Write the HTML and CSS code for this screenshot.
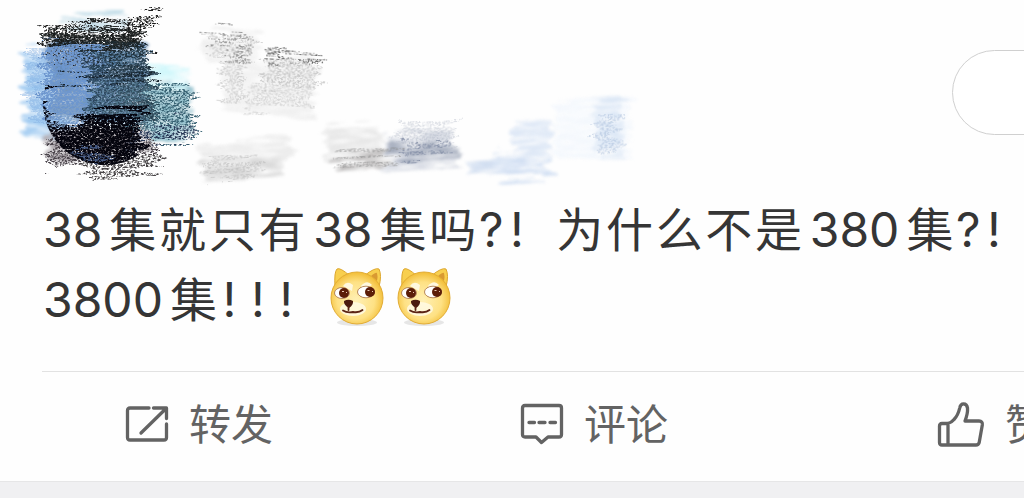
FILE: index.html
```
<!DOCTYPE html>
<html lang="zh-CN">
<head>
    <meta charset="UTF-8">
    <meta name="viewport" content="width=device-width, initial-scale=1.0">
    <title>微博</title>
    <link rel="stylesheet" href="styles.css">
</head>
<body>
    <article class="post">
        <header class="post-header">
            <svg class="scribble" width="660" height="195" viewBox="0 0 660 195">
                <defs>
                    <!-- solid crayon: ragged edges, little grain -->
                    <filter id="dense" x="-20%" y="-20%" width="140%" height="140%" color-interpolation-filters="sRGB">
                        <feTurbulence type="fractalNoise" baseFrequency="0.015 0.2" numOctaves="3" seed="4" result="streak"/>
                        <feDisplacementMap in="SourceGraphic" in2="streak" scale="38" xChannelSelector="R" yChannelSelector="B" result="rough"/>
                        <feTurbulence type="fractalNoise" baseFrequency="0.43 0.57" numOctaves="4" seed="9"/>
                        <feColorMatrix values="0 0 0 0 0  0 0 0 0 0  0 0 0 0 0  3.5 0 0 0 -0.9"/>
                        <feGaussianBlur stdDeviation="0.4" result="grain"/>
                        <feComposite in="rough" in2="grain" operator="in"/>
                    </filter>
                    <!-- dry crayon: the paper shows through -->
                    <filter id="dry" x="-20%" y="-20%" width="140%" height="140%" color-interpolation-filters="sRGB">
                        <feTurbulence type="fractalNoise" baseFrequency="0.012 0.18" numOctaves="3" seed="21" result="streak"/>
                        <feDisplacementMap in="SourceGraphic" in2="streak" scale="36" xChannelSelector="R" yChannelSelector="B" result="rough"/>
                        <feTurbulence type="fractalNoise" baseFrequency="0.43 0.57" numOctaves="4" seed="2"/>
                        <feColorMatrix values="0 0 0 0 0  0 0 0 0 0  0 0 0 0 0  4 0 0 0 -1.6"/>
                        <feGaussianBlur stdDeviation="0.5" result="grain"/>
                        <feComposite in="rough" in2="grain" operator="in"/>
                    </filter>
                    <!-- faint colour spread under the strokes -->
                    <filter id="wash" x="-20%" y="-30%" width="140%" height="160%" color-interpolation-filters="sRGB">
                        <feTurbulence type="fractalNoise" baseFrequency="0.012 0.14" numOctaves="3" seed="7" result="streak"/>
                        <feDisplacementMap in="SourceGraphic" in2="streak" scale="26" xChannelSelector="R" yChannelSelector="B" result="rough"/>
                        <feTurbulence type="fractalNoise" baseFrequency="0.04 0.3" numOctaves="3" seed="12"/>
                        <feColorMatrix values="0 0 0 0 0  0 0 0 0 0  0 0 0 0 0  2.2 0 0 0 -0.35" result="grain"/>
                        <feComposite in="rough" in2="grain" operator="in" result="r"/>
                        <feGaussianBlur in="r" stdDeviation="1.5"/>
                    </filter>
                    <clipPath id="avatar">
                        <circle cx="105" cy="103" r="62"/>
                    </clipPath>
                </defs>

                <!-- avatar -->
                <g>
                    <g filter="url(#wash)">
                        <path d="M24 50H70V134H24Z" fill="#9cc8f0"/>
                        <path d="M140 66H190V95H140Z" fill="#d2f7fb"/>
                        <path d="M150 86H190V140H140Z" fill="#8fbecb"/>
                        <path d="M60 13H125V30H60Z" fill="#c3dde8"/>
                        <path d="M48 132H150V158H48Z" fill="#a8a2a8"/>
                        <path d="M50 42H146V120H50Z" fill="#6086b0"/>
                    </g>
                    <g filter="url(#dry)">
                        <path d="M46 20H118L158 9L163 13L142 32L150 62H46Z" fill="#1c1c1c"/>
                        <path d="M125 86H190L194 140L120 148Z" fill="#396374"/>
                        <path d="M48 136H160V156H100V162L50 172Z" fill="#4a444b"/>
                        <path d="M84 158L160 152L162 168L86 176Z" fill="#4a4749"/>
                        <path d="M130 128L190 124V138L130 146Z" fill="#2a3a58"/>
                    </g>
                    <g filter="url(#dense)">
                        <path d="M46 30H140V48H46Z" fill="#15191a" opacity=".9"/>
                        <path d="M30 52H90V122H30Z" fill="#84b0e2" opacity=".5"/>
                        <path d="M44 46L112 44V118H44Z" fill="#6d96ce"/>
                    </g>
                    <g filter="url(#dense)">
                        <path d="M98 50H146V70H98Z" fill="#466c88" opacity=".8"/>
                        <path d="M92 66L150 60V124H84Z" fill="#22394a" opacity=".85"/>
                    </g>
                    <g filter="url(#dry)">
                        <path d="M60 74L152 68V78H60Z" fill="#16222c"/>
                        <path d="M80 46H146V64H80Z" fill="#1c2c36" opacity=".8"/>
                        <path d="M92 80H150V122H84Z" fill="#6d9cb4" opacity=".5"/>
                    </g>
                    <g clip-path="url(#avatar)">
                        <g filter="url(#dense)">
                            <path d="M38 90L45 92L50 120L78 126L86 114L140 108V170H38Z" fill="#060611"/>
                        </g>
                        <g filter="url(#dense)">
                            <path d="M60 132L80 128L84 114L134 110V170H60Z" fill="#04040d"/>
                            <path d="M66 134H134V154H66Z" fill="#04040d"/>
                        </g>
                        <g filter="url(#dry)">
                            <path d="M48 104H84V128H50Z" fill="#7d9fc8"/>
                            <path d="M74 150H104V162H84Z" fill="#516b9e" opacity=".8"/>
                        </g>
                    </g>
                </g>

                <!-- name -->
                <g transform="rotate(3 260 80)">
                    <g filter="url(#wash)">
                        <path d="M202 34H256V60H316V114H224V62H202Z" fill="#e9e9e9" opacity=".7"/>
                    </g>
                    <g filter="url(#dry)">
                        <path d="M206 35H250V41H206Z" fill="#999"/>
                        <path d="M208 42H252V50H208Z" fill="#bbb" opacity=".6"/>
                        <path d="M228 46H250V64H228Z" fill="#777" opacity=".7"/>
                        <path d="M222 60H244V102H222Z" fill="#aaa" opacity=".45"/>
                        <path d="M266 56H324V61H266Z" fill="#666"/>
                        <path d="M262 60H318V86H262Z" fill="#999" opacity=".45"/>
                        <path d="M250 84H312V112H250Z" fill="#999" opacity=".3"/>
                    </g>
                </g>

                <!-- time and source -->
                <g transform="rotate(-3 400 140)">
                    <g filter="url(#wash)">
                        <path d="M200 134H290V154H200Z" fill="#ececec"/>
                        <path d="M200 150H285V170H200Z" fill="#dadada"/>
                        <path d="M326 122H380V160H326Z" fill="#e8e8e8"/>
                        <path d="M330 151H395V162H330Z" fill="#bebcbc"/>
                        <path d="M384 134H456V171H384Z" fill="#d6dae3"/>
                        <path d="M386 144H456V158H386Z" fill="#a3abbc"/>
                        <path d="M464 166H550V178H464Z" fill="#d0ddf0"/>
                        <path d="M492 158H550V184H492Z" fill="#d3e0f3"/>
                        <path d="M512 132H551V165H512Z" fill="#dee8f6"/>
                        <path d="M555 110H630V166H555Z" fill="#f4f8fd"/>
                        <path d="M596 108H622V166H596Z" fill="#dde8f6"/>
                    </g>
                    <g filter="url(#dry)">
                        <path d="M204 150H262V166H204Z" fill="#aaa" opacity=".45"/>
                        <path d="M332 150H398V160H332Z" fill="#888" opacity=".5"/>
                        <path d="M400 124H455V144H400Z" fill="#aab1c0" opacity=".4"/>
                        <path d="M402 144H452V158H402Z" fill="#7e8aa2" opacity=".8"/>
                        <path d="M596 124H618V164H596Z" fill="#94add0" opacity=".4"/>
                    </g>
                </g>
            </svg>
            <button class="follow" aria-label="关注"></button>
        </header>

        <div class="post-text">
            <p><span class="num first">38</span><span class="han">集就只有</span><span class="num">38</span><span class="han">集吗</span><span class="mark">?!</span><span class="gap"></span><span class="han">为什么不是</span><span class="num">380</span><span class="han">集</span><span class="mark">?!</span></p>
            <p><span class="num first">3800</span><span class="han">集</span><span class="mark triple">!!!</span><svg class="doge"><use href="#doge"/></svg><svg class="doge"><use href="#doge"/></svg></p>
        </div>

        <footer class="actions">
            <div class="action">
                <svg width="42" height="36" viewBox="0 0 42 36">
                    <path d="M23 2H4Q1.500 2 1.500 4.500V31.500Q1.500 34 4 34H38Q40.500 34 40.500 31.500V18M27.500 2H40.500V12.500M39.500 3L15 27"/>
                </svg>
                <span>转发</span>
            </div>
            <div class="action">
                <svg width="42" height="40" viewBox="0 0 42 40">
                    <path d="M4 1.500H38Q40.500 1.500 40.500 4V30.500Q40.500 33 38 33H27L20.500 38.500L15 33H4Q1.500 33 1.500 30.500V4Q1.500 1.500 4 1.500Z"/>
                    <path d="M8 18.500H13.500M18 18.500H24M29 18.500H34.500"/>
                </svg>
                <span>评论</span>
            </div>
            <div class="action like">
                <svg width="46" height="45" viewBox="0 0 46 45">
                    <path d="M10 21.500H4Q1.500 21.500 1.500 24V40.500Q1.500 43 4 43H38Q40.500 43 41.200 40.500L44.300 23Q44.800 19 41 19H27Q30 11 29.500 6Q29 1.800 25.500 1.800Q22.500 1.800 21.700 6Q20 13.500 16 17.500Q13.500 20.500 10 21.500ZM10 21.500V43"/>
                </svg>
                <span>赞</span>
            </div>
        </footer>
    </article>

    <svg class="sprite">
        <defs>
            <radialGradient id="face" cx=".48" cy=".55" r=".55">
                <stop offset="0" stop-color="#fff0b5"/>
                <stop offset=".65" stop-color="#fee184"/>
                <stop offset="1" stop-color="#f2bd35"/>
            </radialGradient>
        </defs>
        <symbol id="doge" viewBox="0 0 56 60">
            <ellipse cx="28" cy="55.500" rx="20" ry="3.500" fill="#bbb" opacity=".35"/>
            <path d="M6 20Q5 5 8 2Q11 0 21 9ZM35 9Q46 0 50 2Q53 8 50 20Z" fill="#f8cf4e" stroke="#dda62b" stroke-width="1"/>
            <path d="M42 9Q47 5 48 6Q49 9 48 14Z" fill="#d99a32"/>
            <circle cx="28" cy="31" r="26" fill="url(#face)" stroke="#e2ac34" stroke-width="1"/>
            <path d="M24 18Q18 13 14 19L23 24ZM32 19Q38 12 43 18L33 24Z" fill="#fff8de"/>
            <ellipse cx="24" cy="42" rx="13" ry="7" fill="#fffbe9" opacity=".8"/>
            <ellipse cx="13" cy="26" rx="7.500" ry="5.500" fill="#fff" stroke="#a46c3c" stroke-width=".8"/>
            <ellipse cx="37" cy="25" rx="8.500" ry="5.800" fill="#fff" stroke="#a46c3c" stroke-width=".8"/>
            <circle cx="15" cy="26" r="5" fill="#5b1d08"/>
            <circle cx="41" cy="25" r="5" fill="#5b1d08"/>
            <path d="M13 24.500h2M17 25.500h1M38.500 23.500h2M43 24.500h1" stroke="#e8c9b4" stroke-width="1.200"/>
            <path d="M15 34Q19.500 31.500 24 34Q24.500 38 20 41Q14.500 38 15 34Z" fill="#4b1a0e"/>
            <path d="M19.500 40V43M14 43.500Q18 46 24 45Q30 46 33.500 43" fill="none" stroke="#5b2415" stroke-width="1.800" stroke-linecap="round"/>
        </symbol>
    </svg>
</body>
</html>
```

FILE: styles.css
```
* {
    box-sizing: border-box;
}

body {
    margin: 0;
    height: 498px;
    overflow: hidden;
    background-color: #f0f0f2;
    font-family: Inter, "Noto Sans CJK SC", sans-serif;
    color: #353535;
}

.post {
    height: 482px;
    overflow: hidden;
    background-color: #fefefe;
    border-bottom: 1px solid #e6e6e7;
}

.post-header {
    display: flex;
    justify-content: space-between;
    height: 195px;
}

.scribble {
    flex: none;
}

.follow {
    flex: none;
    width: 170px;
    height: 85px;
    margin: 50px -98px 0 0;
    border: 1px solid #d0d0d0;
    border-radius: 43px;
    background: #fff;
}

.post-text {
    height: 176px;
    padding-left: 44px;
    white-space: nowrap;
}

.post-text p {
    display: flex;
    align-items: center;
    height: 70px;
    margin: 0;
    line-height: 70px;
}

.han {
    padding-bottom: 6px;
    font-family: "Noto Sans CJK SC", sans-serif;
    font-size: 47px;
    letter-spacing: 2.7px;
}

.num {
    margin: 0 7px 0 5px;
    font-family: Inter, sans-serif;
    font-size: 48px;
    letter-spacing: 0;
}

.num.first {
    margin-left: -1px;
    margin-right: 7px;
}

.mark {
    font-family: Inter, sans-serif;
    font-size: 48px;
    letter-spacing: 6.5px;
}

.mark.triple {
    margin-left: 3px;
    letter-spacing: 14.5px;
}

.gap {
    width: 26px;
}

.doge {
    width: 56px;
    height: 60px;
    margin: 0 11px 6px 0;
}

.triple + .doge {
    margin-left: 21px;
}

.actions {
    display: grid;
    grid-template-columns: repeat(3, 395px);
    height: 105px;
    margin-left: 42px;
    border-top: 1px solid #e2e2e2;
}

.action {
    display: flex;
    align-items: center;
    justify-content: center;
    gap: 21px;
    margin-left: -80px;
    color: #636363;
    font-family: "Noto Sans CJK SC", sans-serif;
    font-size: 42px;
    line-height: 60px;
}

.action span {
    padding-bottom: 5px;
}

.like {
    padding-left: 6px;
}

.action svg {
    flex: none;
    fill: none;
    stroke: #636363;
    stroke-width: 3.3;
    stroke-linecap: round;
    stroke-linejoin: round;
    overflow: visible;
}

.sprite {
    position: absolute;
    width: 0;
    height: 0;
}
```
